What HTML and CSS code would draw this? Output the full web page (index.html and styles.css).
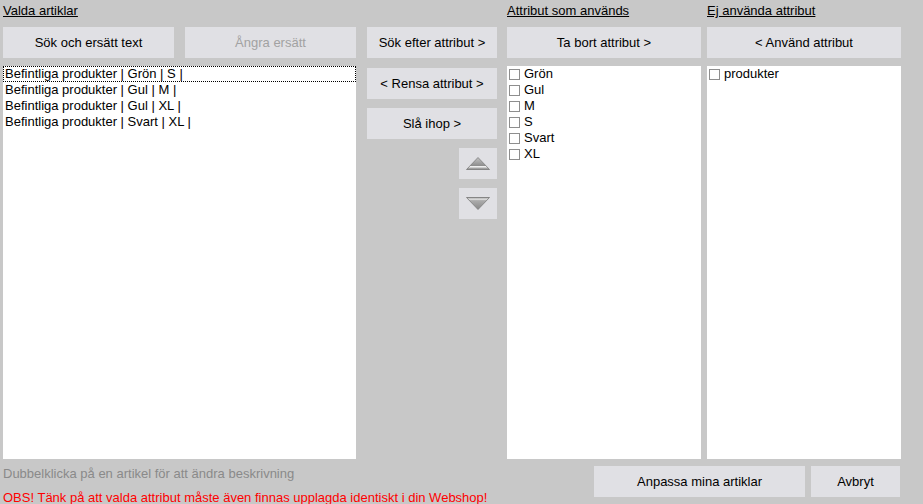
FILE: index.html
```html
<!DOCTYPE html>
<html lang="sv">
<head>
    <meta charset="UTF-8">
    <title>Attribut</title>
    <link rel="stylesheet" href="styles.css">
</head>
<body>
    <div class="main">
        <div class="col col-articles">
            <div class="col-title">Valda artiklar</div>
            <div class="btn-row">
                <button class="btn">Sök och ersätt text</button>
                <button class="btn" disabled>Ångra ersätt</button>
            </div>
            <div class="listbox">
                <div class="list-item focused">Befintliga produkter | Grön | S |</div>
                <div class="list-item">Befintliga produkter | Gul | M |</div>
                <div class="list-item">Befintliga produkter | Gul | XL |</div>
                <div class="list-item">Befintliga produkter | Svart | XL |</div>
            </div>
        </div>
        <div class="col col-actions">
            <button class="btn">Sök efter attribut &gt;</button>
            <button class="btn">&lt; Rensa attribut &gt;</button>
            <button class="btn">Slå ihop &gt;</button>
            <button class="btn btn-arrow" title="Upp">
                <svg width="24" height="13" viewBox="0 0 24 13">
                    <defs>
                        <linearGradient id="gUp" x1="0" y1="0" x2="0" y2="1">
                            <stop offset="0" stop-color="#c4c4c4"/>
                            <stop offset="0.68" stop-color="#8e8e8e"/>
                            <stop offset="0.74" stop-color="#f2f2f2"/>
                            <stop offset="0.86" stop-color="#c4c4c4"/>
                            <stop offset="1" stop-color="#6e6e6e"/>
                        </linearGradient>
                    </defs>
                    <polygon points="12,0.5 23.5,12.5 0.5,12.5" fill="url(#gUp)" stroke="#7c7c7c" stroke-width="0.8"/>
                </svg>
            </button>
            <button class="btn btn-arrow" title="Ner">
                <svg width="24" height="13" viewBox="0 0 24 13">
                    <defs>
                        <linearGradient id="gDown" x1="0" y1="0" x2="0" y2="1">
                            <stop offset="0" stop-color="#6e6e6e"/>
                            <stop offset="0.12" stop-color="#ececec"/>
                            <stop offset="0.26" stop-color="#acacac"/>
                            <stop offset="1" stop-color="#888888"/>
                        </linearGradient>
                    </defs>
                    <polygon points="0.5,0.5 23.5,0.5 12,12.5" fill="url(#gDown)" stroke="#7c7c7c" stroke-width="0.8"/>
                </svg>
            </button>
        </div>
        <div class="col col-used">
            <div class="col-title">Attribut som används</div>
            <button class="btn">Ta bort attribut &gt;</button>
            <div class="listbox">
                <label class="check-item"><input type="checkbox">Grön</label>
                <label class="check-item"><input type="checkbox">Gul</label>
                <label class="check-item"><input type="checkbox">M</label>
                <label class="check-item"><input type="checkbox">S</label>
                <label class="check-item"><input type="checkbox">Svart</label>
                <label class="check-item"><input type="checkbox">XL</label>
            </div>
        </div>
        <div class="col col-unused">
            <div class="col-title">Ej använda attribut</div>
            <button class="btn">&lt; Använd attribut</button>
            <div class="listbox">
                <label class="check-item"><input type="checkbox">produkter</label>
            </div>
        </div>
    </div>
    <div class="footer">
        <div class="notes">
            <div class="hint">Dubbelklicka på en artikel för att ändra beskrivning</div>
            <div class="warning">OBS! Tänk på att valda attribut måste även finnas upplagda identiskt i din Webshop!</div>
        </div>
        <div class="footer-buttons">
            <button class="btn btn-apply">Anpassa mina artiklar</button>
            <button class="btn btn-cancel">Avbryt</button>
        </div>
    </div>
</body>
</html>
```

FILE: styles.css
```css
body {
    margin: 0;
    padding: 0 22px 0 3px;
    background: #c8c8c8;
    font-family: "Liberation Sans", Arial, sans-serif;
    font-size: 13px;
    color: #000;
    height: 504px;
    overflow: hidden;
}
.main {
    display: flex;
    align-items: flex-start;
}
.col {
    display: flex;
    flex-direction: column;
    flex-shrink: 0;
}
.col-articles {
    width: 353px;
}
.col-actions {
    width: 130px;
    margin-left: 11px;
    padding-top: 27px;
    gap: 9px;
}
.col-actions .btn:first-child {
    margin-bottom: 1px;
}
.col-used {
    width: 194px;
    margin-left: 10px;
}
.col-unused {
    width: 194px;
    margin-left: 6px;
}
.col-title {
    height: 27px;
    box-sizing: border-box;
    padding-top: 3px;
    line-height: 15px;
    text-decoration: underline;
    white-space: nowrap;
}
.btn {
    height: 31px;
    border: none;
    background: #e0e0e4;
    font-family: inherit;
    font-size: 13px;
    color: #000;
    padding: 0;
    cursor: pointer;
}
.btn:disabled {
    color: #a2a2a2;
    cursor: default;
}
.btn-row {
    display: flex;
    gap: 11px;
}
.btn-row .btn {
    flex: 1;
}
.btn-arrow {
    width: 38px;
    align-self: flex-end;
    display: flex;
    align-items: center;
    justify-content: center;
}
.btn-arrow svg {
    display: block;
}
.listbox {
    margin-top: 8px;
    height: 393px;
    background: #fff;
    overflow: hidden;
}
.list-item {
    height: 16px;
    line-height: 16px;
    padding-left: 2px;
    white-space: nowrap;
}
.list-item.focused {
    outline: 1px dotted #000;
    outline-offset: -1px;
}
.check-item {
    display: flex;
    align-items: center;
    height: 16px;
    line-height: 16px;
    padding-left: 2px;
}
.check-item input {
    appearance: none;
    -webkit-appearance: none;
    width: 11px;
    height: 11px;
    margin: 0 4px 0 0;
    border: 1px solid #8e8e8e;
    background: #fff;
    box-sizing: border-box;
}
.footer {
    display: flex;
    align-items: flex-start;
    padding: 7px 1px 0 0;
}
.notes {
    flex: 1;
    white-space: nowrap;
}
.hint {
    color: #8a8a8a;
    line-height: 16px;
}
.warning {
    color: #ff0000;
    line-height: 16px;
    margin-top: 8px;
}
.footer-buttons {
    display: flex;
    gap: 6px;
}
.btn-apply {
    width: 211px;
}
.btn-cancel {
    width: 89px;
}
```
